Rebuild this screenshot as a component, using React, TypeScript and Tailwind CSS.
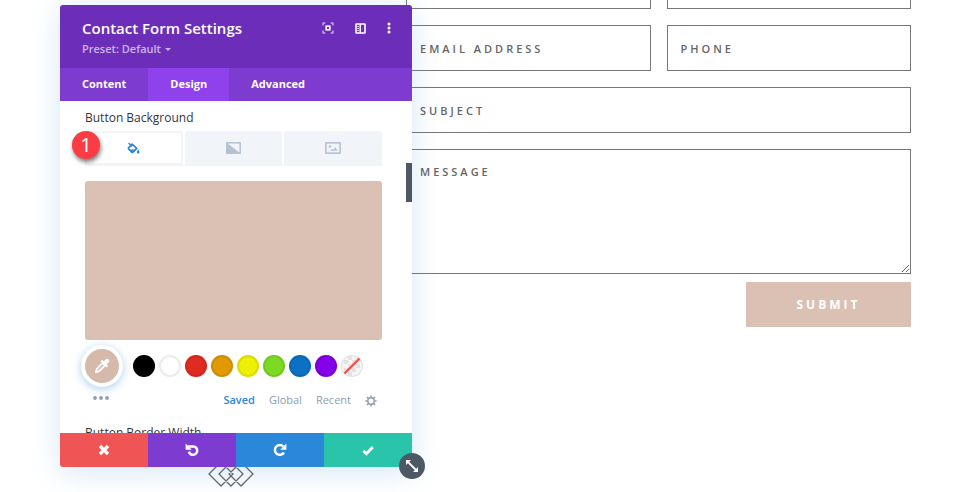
import React, { useState } from "react";

const fieldClass =
  "block h-[46px] w-full min-w-0 rounded-none border border-[#777] bg-transparent px-[13px] text-[11px] font-semibold tracking-[3px] text-[#666] placeholder:text-[#666] outline-none";

const swatches = [
  { name: "Black", color: "bg-black" },
  { name: "White", color: "bg-white" },
  { name: "Red", color: "bg-[#e02b20]" },
  { name: "Orange", color: "bg-[#e09900]" },
  { name: "Yellow", color: "bg-[#edf000]" },
  { name: "Green", color: "bg-[#7cda24]" },
  { name: "Blue", color: "bg-[#0c71c3]" },
  { name: "Purple", color: "bg-[#8300e9]" },
];

function FocusIcon() {
  return (
    <svg width="12" height="12" viewBox="0 0 12 12" fill="none" stroke="currentColor" aria-hidden="true">
      <path d="M1 3.5V1h2.5M8.5 1H11v2.5M11 8.5V11H8.5M3.5 11H1V8.5" strokeWidth="1.1" opacity=".8" />
      <rect x="4.2" y="4.2" width="3.6" height="3.6" strokeWidth="1.6" />
    </svg>
  );
}

function SidebarIcon() {
  return (
    <svg width="11" height="11" viewBox="0 0 11 11" fill="none" stroke="currentColor" aria-hidden="true">
      <rect x="1" y="1" width="9" height="9" rx=".5" strokeWidth="1.6" />
      <path d="M5.2 1v9" strokeWidth="1.4" />
      <path d="M2.4 3.5h1.4M2.4 5.5h1.4M2.4 7.5h1.4" strokeWidth="1" />
    </svg>
  );
}

function MoreIcon() {
  return (
    <svg width="4" height="12" viewBox="0 0 4 12" fill="currentColor" aria-hidden="true">
      <circle cx="2" cy="2" r="1.5" />
      <circle cx="2" cy="6" r="1.5" />
      <circle cx="2" cy="10" r="1.5" />
    </svg>
  );
}

function BucketIcon() {
  return (
    <svg width="13" height="13" viewBox="0 0 13 13" aria-hidden="true">
      <path d="M5 2.2 9.8 6.3 6 10.1a1 1 0 0 1-1.3 0L1.6 7a1 1 0 0 1 0-1.2Z" fill="none" stroke="currentColor" strokeWidth="1.7" strokeLinejoin="round" />
      <path d="M1.6 1 5 4.6" stroke="currentColor" strokeWidth="1.4" />
      <path d="M2.5 7.400h6L5.5 10Z" fill="currentColor" />
      <path d="M11.2 7.3c.8 1.3 1.3 2.2 1.3 3a1.3 1.3 0 0 1-2.6 0c0-.8.5-1.7 1.3-3Z" fill="currentColor" />
    </svg>
  );
}

function GradientIcon() {
  return (
    <svg width="15" height="12" viewBox="0 0 15 12" aria-hidden="true">
      <rect x=".8" y=".8" width="13.4" height="10.4" fill="none" stroke="currentColor" strokeWidth="1.5" />
      <path d="M1 1l13 10H1Z" fill="currentColor" />
    </svg>
  );
}

function ImageIcon() {
  return (
    <svg width="16" height="12" viewBox="0 0 16 12" aria-hidden="true">
      <rect x=".9" y=".9" width="14.2" height="10.2" fill="none" stroke="currentColor" strokeWidth="1.6" />
      <circle cx="5" cy="4.5" r="1.2" fill="currentColor" />
      <path d="M5 8.8 7 7l1.5 1 1.7-3 2.3 3.8Z" fill="currentColor" />
    </svg>
  );
}

function DropperIcon() {
  return (
    <svg width="18" height="18" viewBox="0 0 18 18" aria-hidden="true">
      <path d="m10.2 5.3-6 6.2c-.7.7-.7 1.8-1.4 3.7 1.9-.7 3-.7 3.7-1.4l6.2-6" fill="none" stroke="white" strokeWidth="1.7" strokeLinejoin="round" />
      <path d="M9 4.2 13.8 9" stroke="white" strokeWidth="2.2" strokeLinecap="round" />
      <path d="m11.6 6.4 2.5-2.5" stroke="white" strokeWidth="4.2" strokeLinecap="round" />
    </svg>
  );
}

function GearIcon() {
  return (
    <svg width="12" height="12" viewBox="0 0 12 12" fill="none" stroke="currentColor" aria-hidden="true">
      <circle cx="6" cy="6" r="3.2" strokeWidth="1.4" />
      <path d="M6 .4v2M6 9.6v2M.4 6h2M9.6 6h2M2 2l1.4 1.4M8.6 8.6 10 10M10 2 8.6 3.4M3.4 8.6 2 10" strokeWidth="1.5" />
    </svg>
  );
}

function UndoIcon() {
  return (
    <svg width="14" height="14" viewBox="0 0 14 14" fill="none" aria-hidden="true">
      <path d="M2.5 3.4H8a4.2 4.2 0 1 1-4.1 5.2" stroke="currentColor" strokeWidth="2.5" />
      <path d="M.6.6v6.2h6.2Z" fill="currentColor" />
    </svg>
  );
}

function RedoIcon() {
  return (
    <svg width="14" height="14" viewBox="0 0 14 14" fill="none" aria-hidden="true">
      <path d="M11 9.5A4.9 4.9 0 1 1 10.2 3.4" stroke="currentColor" strokeWidth="2.5" />
      <path d="M13.4.6v6.2H7.2Z" fill="currentColor" />
    </svg>
  );
}

function Diamonds() {
  return (
    <svg width="46" height="26" viewBox="0 0 46 26" fill="none" stroke="#666" strokeWidth="1.3" aria-hidden="true">
      <path d="M13 1 25 13 13 25 1 13ZM33 1 45 13 33 25 21 13ZM23 1 35 13 23 25 11 13Z" />
    </svg>
  );
}

function SettingsWindow() {
  const [tab, setTab] = useState("Design");
  const backgrounds = [
    { name: "Background color", icon: <BucketIcon />, style: "border-2 border-[#f1f5f9] bg-white text-[#2b87da]" },
    { name: "Background gradient", icon: <GradientIcon />, style: "bg-[#f1f5f9] text-[#b5c1d1]" },
    { name: "Background image", icon: <ImageIcon />, style: "bg-[#f1f5f9] text-[#b5c1d1]" },
  ];
  return (
    <section aria-label="Contact Form Settings" className="absolute top-[5px] left-[60px] w-[352px] rounded-[3px] shadow-[0_5px_30px_rgba(43,135,218,0.2)]">
      <div className="overflow-hidden rounded-[3px] bg-white">
        <header className="flex h-[63px] items-start justify-between bg-[#6c2eb9] pt-3 pr-[21px] pl-[22px] text-white">
          <div>
            <h1 className="text-[15px] leading-[22px] font-semibold">Contact Form Settings</h1>
            <button className="flex items-center gap-1 text-[11px] leading-5 font-semibold text-[#cdb5ea]">
              Preset: Default
              <span className="border-x-[3px] border-t-[3px] border-x-transparent border-t-current" />
            </button>
          </div>
          <div className="flex h-[22px] items-center gap-[21px]">
            <button aria-label="Expand"><FocusIcon /></button>
            <button aria-label="Dock to side"><SidebarIcon /></button>
            <button aria-label="More options"><MoreIcon /></button>
          </div>
        </header>

        <nav className="flex h-[33px] bg-[#7e3bd0] text-[11px] font-bold text-white">
          {["Content", "Design", "Advanced"].map((name) => (
            <button key={name} onClick={() => setTab(name)} className={`px-[22px] ${tab === name ? "bg-[#8f42ec]" : ""}`}>
              {name}
            </button>
          ))}
        </nav>

        <div className="relative h-[332px] overflow-hidden pt-[9px] pr-[30px] pl-[25px]">
          <h2 className="text-xs leading-4 font-medium text-[#32373c]">Button Background</h2>
          <div className="mt-[5px] grid h-[35px] grid-cols-3 gap-0.5 border-b border-[#f1f5f9]">
            {backgrounds.map((b) => (
              <button key={b.name} aria-label={b.name} className={`flex items-center justify-center rounded-t-[3px] ${b.style}`}>
                {b.icon}
              </button>
            ))}
          </div>
          <div className="mt-[15px] h-[159px] rounded-[3px] bg-[#dbc1b3]" />

          <div className="-ml-1 flex h-[51px] items-center">
            <button aria-label="Pick a color" className="mr-2.5 flex size-[42px] shrink-0 items-center justify-center rounded-full border-4 border-white bg-[#d5baab] shadow-[0_2px_8px_rgba(43,135,218,0.4)]">
              <DropperIcon />
            </button>
            <div className="flex gap-1">
              {swatches.map((s) => (
                <button key={s.name} aria-label={s.name} className={`size-[22px] rounded-full shadow-[inset_0_0_0_2px_rgba(0,0,0,0.08)] ${s.color}`} />
              ))}
              <button aria-label="Transparent" className="size-[22px] overflow-hidden rounded-full bg-[#f5f5f5] shadow-[inset_0_0_0_1px_rgba(0,0,0,0.08)]">
                <svg width="22" height="22" viewBox="0 0 22 22" aria-hidden="true">
                  <path d="M7 1h4v4H7zM15 1h4v4h-4zM3 5h4v4H3zM11 5h4v4h-4zM7 9h4v4H7zM15 9h4v4h-4zM3 13h4v4H3zM11 13h4v4h-4zM7 17h4v4H7z" fill="#e2e2e2" />
                  <path d="M3.5 18.5l15-15" stroke="#f44" strokeWidth="2.2" />
                </svg>
              </button>
            </div>
          </div>

          <div className="flex h-[18px] items-center justify-between pl-2 text-[11px] text-[#8d9db3]">
            <button aria-label="More colors" className="mb-1">
              <svg width="16" height="4" viewBox="0 0 16 4" fill="currentColor" aria-hidden="true">
                <circle cx="2" cy="2" r="1.9" />
                <circle cx="8" cy="2" r="1.9" />
                <circle cx="14" cy="2" r="1.9" />
              </svg>
            </button>
            <div className="flex items-center gap-3.5 pr-[5px] font-medium">
              <button className="font-semibold text-[#2b87da]">Saved</button>
              <button>Global</button>
              <button>Recent</button>
              <button aria-label="Palette settings" className="pt-0.5"><GearIcon /></button>
            </div>
          </div>
          <h2 className="mt-4 text-xs leading-4 font-medium text-[#32373c]">Button Border Width</h2>
          <div className="absolute top-[62px] right-0 h-[39px] w-1.5 bg-[#4c5866]" />
        </div>

        <footer className="grid h-[34px] grid-cols-4 text-white">
          <button aria-label="Discard" className="flex items-center justify-center bg-[#ef5555]">
            <svg width="12" height="12" viewBox="0 0 12 12" aria-hidden="true">
              <path d="m2 2 8 8M10 2l-8 8" stroke="currentColor" strokeWidth="3.2" />
            </svg>
          </button>
          <button aria-label="Undo" className="flex items-center justify-center bg-[#7e3bd0]"><UndoIcon /></button>
          <button aria-label="Redo" className="flex items-center justify-center bg-[#2b87da]"><RedoIcon /></button>
          <button aria-label="Save" className="flex items-center justify-center bg-[#29c4a9]">
            <svg width="12" height="11" viewBox="0 0 12 11" fill="none" aria-hidden="true">
              <path d="m1.3 5.7 3.2 3L10.8 2" stroke="currentColor" strokeWidth="2.8" />
            </svg>
          </button>
        </footer>
      </div>

      <span className="absolute top-[126px] left-[12px] flex size-7 items-center justify-center rounded-full bg-[#fb3c43] font-['Noto_Sans',sans-serif] text-xl text-white shadow-[1px_3px_4px_rgba(0,0,0,0.5)]">
        1
      </span>
      <button aria-label="Resize" className="absolute -right-[13px] -bottom-3 flex size-[26px] items-center justify-center rounded-full bg-[#4c5866] text-white">
        <svg width="14" height="14" viewBox="0 0 14 14" aria-hidden="true">
          <path d="m3 3 8 8" stroke="currentColor" strokeWidth="1.8" />
          <path d="M1 1h5L1 6ZM13 13H8l5-5Z" fill="currentColor" />
        </svg>
      </button>
    </section>
  );
}

export default function App() {
  return (
    <main className="relative min-h-screen overflow-hidden bg-white font-['Open_Sans','Noto_Sans',sans-serif]">
      <div className="flex">
        <div className="flex w-[406px] shrink-0 justify-center pt-[461px] pl-14">
          <Diamonds />
        </div>
        <form className="-mt-[37px] min-w-0 flex-1 pr-[49px]" onSubmit={(e) => e.preventDefault()}>
          <div className="grid grid-cols-2 gap-4">
            <input aria-label="First name" className={fieldClass} />
            <input aria-label="Last name" className={fieldClass} />
            <input aria-label="Email address" placeholder="EMAIL ADDRESS" className={fieldClass} />
            <input aria-label="Phone" placeholder="PHONE" className={fieldClass} />
            <input aria-label="Subject" placeholder="SUBJECT" className={`${fieldClass} col-span-2`} />
            <textarea aria-label="Message" placeholder="MESSAGE" className={`${fieldClass} col-span-2 h-[125px] resize py-3.5 leading-4`} />
          </div>
          <button className="mt-2 ml-auto block h-[45px] w-[165px] bg-[#dbc1b3] text-xs font-bold tracking-[3px] text-white">SUBMIT</button>
        </form>
      </div>
      <SettingsWindow />
    </main>
  );
}
